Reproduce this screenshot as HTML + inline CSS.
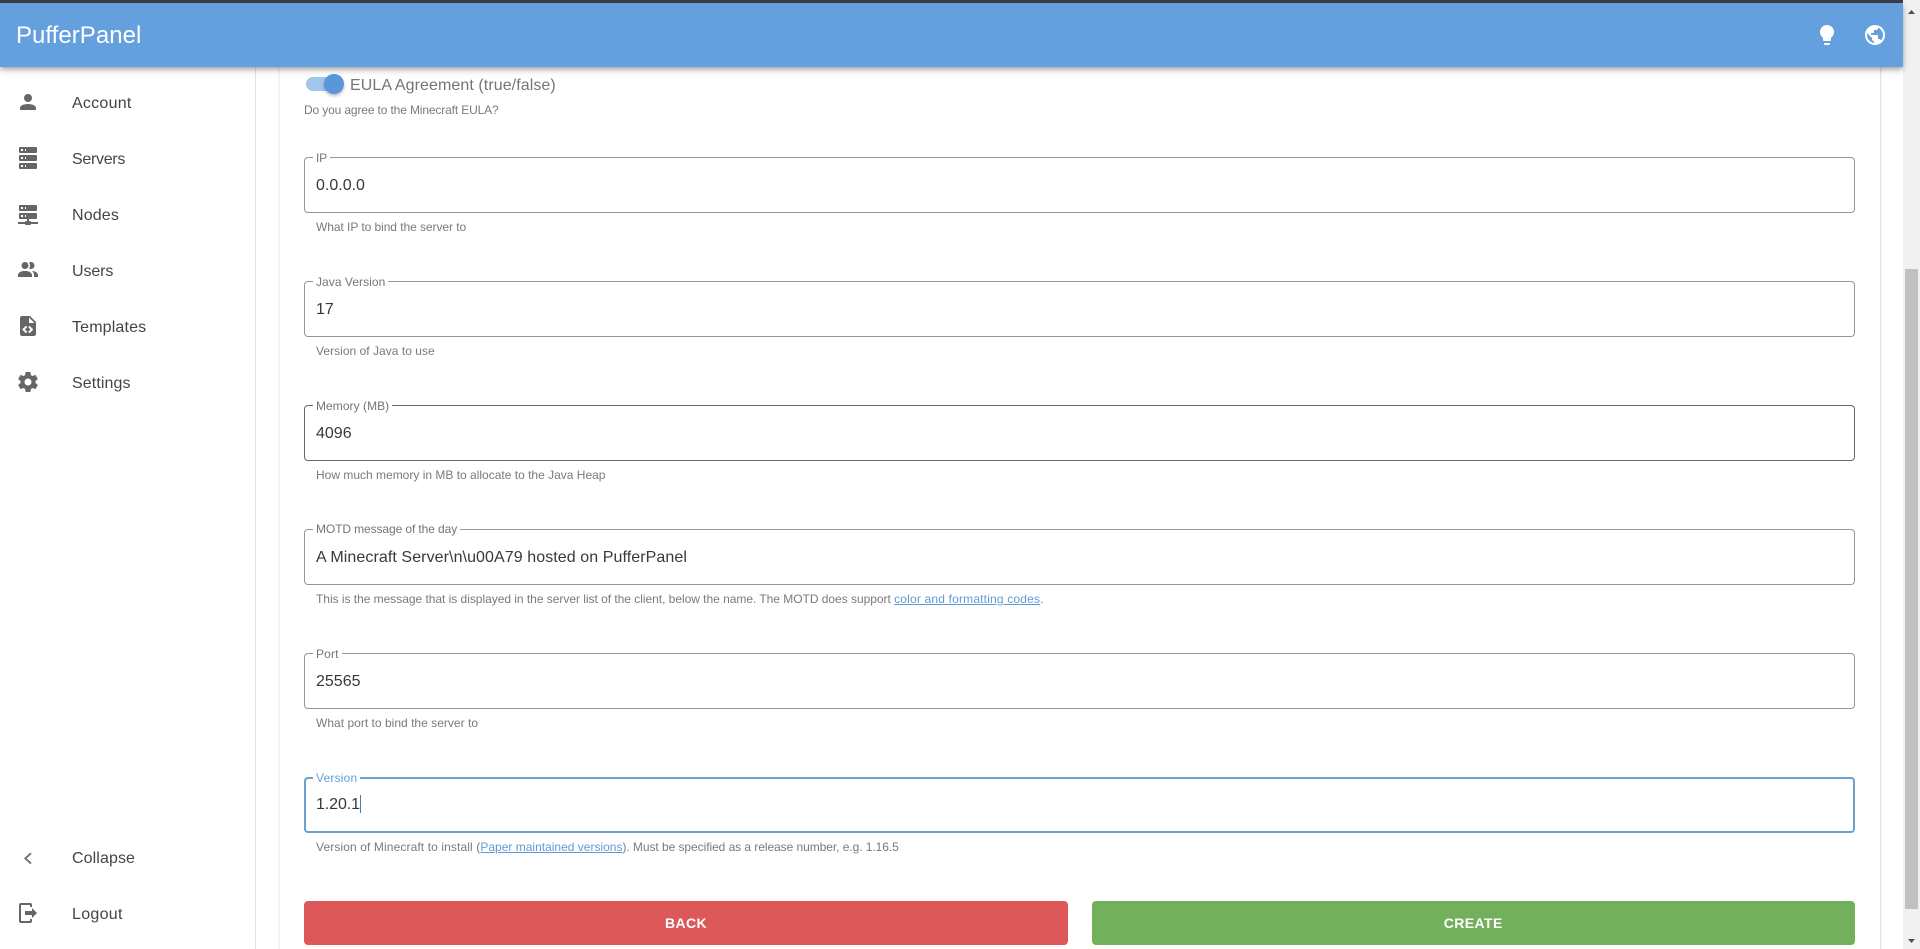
<!DOCTYPE html>
<html lang="en">
<head>
<meta charset="utf-8">
<title>PufferPanel</title>
<style>
html,body{margin:0;padding:0;width:1920px;height:949px;overflow:hidden;background:#fff;font-family:"Liberation Sans",sans-serif;}
.t{position:absolute;white-space:nowrap;line-height:20px;}
#top{position:absolute;left:0;top:0;width:1920px;height:3px;background:#3b3e45;}
#bar{position:absolute;left:0;top:3px;width:1903px;height:64px;background:#649fde;box-shadow:0 2px 4px -1px rgba(0,0,0,.2),0 4px 5px rgba(0,0,0,.14),0 1px 10px rgba(0,0,0,.12);z-index:5;}
#title{left:16px;top:25px;font-size:24px;line-height:22px;color:#fff;z-index:6;letter-spacing:.03px;}
#side{position:absolute;left:0;top:67px;width:255px;height:882px;background:#fff;border-right:1px solid #e0e0e0;}
#card{position:absolute;left:279px;top:0;width:1600px;height:949px;background:#fff;border-left:1px solid #f0f0f0;border-right:1px solid #e4e4e4;box-shadow:0 0 3px rgba(0,0,0,.08);}
.n{font-size:16px;color:#444;left:72px;letter-spacing:.1px;}
svg.i{position:absolute;width:24px;height:24px;left:16px;fill:#666;}
.f{position:absolute;left:304px;width:1549px;height:54px;border:1px solid #959595;border-radius:4px;}
.l{position:absolute;left:312.5px;padding:0 3px;background:#fff;font-size:12px;line-height:12px;color:#757575;white-space:nowrap;letter-spacing:.05px;}
.l b{font-weight:normal;display:inline-block;margin-left:.5px;}
.v{left:316px;font-size:16px;color:#383838;}
.h{left:316px;font-size:12px;color:#7a7a7a;letter-spacing:0;}
.h a{color:#5e9bd6;text-decoration:underline;}
.b{position:absolute;top:901px;height:44px;width:764px;border-radius:4px;color:#fff;font-size:14px;font-weight:bold;letter-spacing:.4px;line-height:44px;text-align:center;}
#sb{position:absolute;left:1903px;top:0;width:17px;height:949px;background:#f1f1f1;}
#sb i{position:absolute;left:2px;width:13px;top:269px;height:640px;background:#c1c1c1;display:block;}
</style>
</head>
<body>
<div id="card"></div>
<div id="side"></div>

<svg class="i" style="top:90px" viewBox="0 0 24 24"><path d="M12,4A4,4 0 0,1 16,8A4,4 0 0,1 12,12A4,4 0 0,1 8,8A4,4 0 0,1 12,4M12,14C16.42,14 20,15.79 20,18V20H4V18C4,15.79 7.58,14 12,14Z"/></svg>
<div class="t n" style="top:93.5px;letter-spacing:.25px">Account</div>
<svg class="i" style="top:146px" viewBox="0 0 24 24"><path d="M4,1H20A1,1 0 0,1 21,2V6A1,1 0 0,1 20,7H4A1,1 0 0,1 3,6V2A1,1 0 0,1 4,1M4,9H20A1,1 0 0,1 21,10V14A1,1 0 0,1 20,15H4A1,1 0 0,1 3,14V10A1,1 0 0,1 4,9M4,17H20A1,1 0 0,1 21,18V22A1,1 0 0,1 20,23H4A1,1 0 0,1 3,22V18A1,1 0 0,1 4,17M9,5H10V3H9V5M9,13H10V11H9V13M9,21H10V19H9V21M5,3V5H7V3H5M5,11V13H7V11H5M5,19V21H7V19H5Z"/></svg>
<div class="t n" style="top:149.5px;letter-spacing:-.3px">Servers</div>
<svg class="i" style="top:202px" viewBox="0 0 24 24"><path d="M13,19H14A1,1 0 0,1 15,20H22V22H15A1,1 0 0,1 14,23H10A1,1 0 0,1 9,22H2V20H9A1,1 0 0,1 10,19H11V17H4A1,1 0 0,1 3,16V12A1,1 0 0,1 4,11H20A1,1 0 0,1 21,12V16A1,1 0 0,1 20,17H13V19M4,3H20A1,1 0 0,1 21,4V8A1,1 0 0,1 20,9H4A1,1 0 0,1 3,8V4A1,1 0 0,1 4,3M9,7H10V5H9V7M9,15H10V13H9V15M5,5V7H7V5H5M5,13V15H7V13H5Z"/></svg>
<div class="t n" style="top:205.5px;letter-spacing:.15px">Nodes</div>
<svg class="i" style="top:258px" viewBox="0 0 24 24"><path d="M16 17V19H2V17S2 13 9 13 16 17 16 17M12.5 7.5A3.5 3.5 0 1 0 9 11A3.5 3.5 0 0 0 12.5 7.5M15.94 13A5.32 5.32 0 0 1 18 17V19H22V17S22 13.37 15.94 13M15 4A3.39 3.39 0 0 0 13.07 4.59A5 5 0 0 1 13.07 10.41A3.39 3.39 0 0 0 15 11A3.5 3.5 0 0 0 15 4Z"/></svg>
<div class="t n" style="top:261.5px;letter-spacing:-.1px">Users</div>
<svg class="i" style="top:314px" viewBox="0 0 24 24"><path d="M13 9H18.5L13 3.5V9M6 2H14L20 8V20C20 21.1 19.1 22 18 22H6C4.89 22 4 21.1 4 20V4C4 2.89 4.89 2 6 2M6.12 15.5L9.86 19.24L11.28 17.83L8.95 15.5L11.28 13.17L9.86 11.76L6.12 15.5M17.28 15.5L13.54 11.76L12.12 13.17L14.45 15.5L12.12 17.83L13.54 19.24L17.28 15.5Z"/></svg>
<div class="t n" style="top:317.5px;letter-spacing:.15px">Templates</div>
<svg class="i" style="top:370px" viewBox="0 0 24 24"><path d="M12,15.5A3.5,3.5 0 0,1 8.5,12A3.5,3.5 0 0,1 12,8.5A3.5,3.5 0 0,1 15.5,12A3.5,3.5 0 0,1 12,15.5M19.43,12.97C19.47,12.65 19.5,12.33 19.5,12C19.5,11.67 19.47,11.34 19.43,11L21.54,9.37C21.73,9.22 21.78,8.95 21.66,8.73L19.66,5.27C19.54,5.05 19.27,4.96 19.05,5.05L16.56,6.05C16.04,5.66 15.5,5.32 14.87,5.07L14.5,2.42C14.46,2.18 14.25,2 14,2H10C9.75,2 9.54,2.18 9.5,2.42L9.13,5.07C8.5,5.32 7.96,5.66 7.44,6.05L4.95,5.05C4.73,4.96 4.46,5.05 4.34,5.27L2.34,8.73C2.21,8.95 2.27,9.22 2.46,9.37L4.57,11C4.53,11.34 4.5,11.67 4.5,12C4.5,12.33 4.53,12.65 4.57,12.97L2.46,14.63C2.27,14.78 2.21,15.05 2.34,15.27L4.34,18.73C4.46,18.95 4.73,19.03 4.95,18.95L7.44,17.94C7.96,18.34 8.5,18.68 9.13,18.93L9.5,21.58C9.54,21.82 9.75,22 10,22H14C14.25,22 14.46,21.82 14.5,21.58L14.87,18.93C15.5,18.67 16.04,18.34 16.56,17.94L19.05,18.95C19.27,19.03 19.54,18.95 19.66,18.73L21.66,15.27C21.78,15.05 21.73,14.78 21.54,14.63L19.43,12.97Z"/></svg>
<div class="t n" style="top:373.5px">Settings</div>
<svg class="i" style="top:845px" viewBox="0 0 24 24"><path d="M15,8.2L9.3,13.4L15,18.6" fill="none" stroke="#707070" stroke-width="1.8"/></svg>
<div class="t n" style="top:848.5px">Collapse</div>
<svg class="i" style="top:901px" viewBox="0 0 24 24"><path d="M16,17V14H9V10H16V7L21,12L16,17M14,2A2,2 0 0,1 16,4V6H14V4H5V20H14V18H16V20A2,2 0 0,1 14,22H5A2,2 0 0,1 3,20V4A2,2 0 0,1 5,2H14Z"/></svg>
<div class="t n" style="top:904.5px;letter-spacing:.3px">Logout</div>

<div style="position:absolute;left:306px;top:77px;width:34px;height:14px;border-radius:7px;background:#a3c5ec"></div>
<div style="position:absolute;left:324px;top:74px;width:20px;height:20px;border-radius:50%;background:#5a96dc;box-shadow:0 2px 3px rgba(0,0,0,.25)"></div>
<div class="t" style="left:350px;top:75.5px;font-size:16px;color:#757575;letter-spacing:.08px">EULA Agreement (true/false)</div>
<div class="t h" style="left:304px;top:100px;letter-spacing:-.14px">Do you agree to the Minecraft EULA?</div>

<div class="f" style="top:157px"></div>
<div class="l" style="top:152px;letter-spacing:-.15px"><b>IP</b></div>
<div class="t v" style="top:175.5px">0.0.0.0</div>
<div class="t h" style="top:217px;letter-spacing:-.06px">What IP to bind the server to</div>

<div class="f" style="top:281px"></div>
<div class="l" style="top:276px"><b>Java Version</b></div>
<div class="t v" style="top:299.5px">17</div>
<div class="t h" style="top:341px;letter-spacing:.03px">Version of Java to use</div>

<div class="f" style="top:405px;border-color:#666"></div>
<div class="l" style="top:400px"><b>Memory (MB)</b></div>
<div class="t v" style="top:423.5px">4096</div>
<div class="t h" style="top:465px">How much memory in MB to allocate to the Java Heap</div>

<div class="f" style="top:529px"></div>
<div class="l" style="top:523px;letter-spacing:-.1px"><b>MOTD message of the day</b></div>
<div class="t v" style="top:547.5px;letter-spacing:.08px">A Minecraft Server\n\u00A79 hosted on PufferPanel</div>
<div class="t h" style="top:589px;letter-spacing:-.03px">This is the message that is displayed in the server list of the client, below the name. The MOTD does support <a href="#" style="letter-spacing:.18px">color and formatting codes</a>.</div>

<div class="f" style="top:653px"></div>
<div class="l" style="top:648px;letter-spacing:.15px"><b>Port</b></div>
<div class="t v" style="top:671.5px">25565</div>
<div class="t h" style="top:713px;letter-spacing:.02px">What port to bind the server to</div>

<div class="f" style="top:777px;width:1547px;height:52px;border:2px solid #6d9fcf"></div>
<div class="l" style="top:772px;color:#649fde;letter-spacing:.2px"><b>Version</b></div>
<div class="t v" style="top:794.5px;letter-spacing:-.1px">1.20.1</div>
<div style="position:absolute;left:360px;top:795px;width:1px;height:18px;background:#4a7fb0"></div>
<div class="t h" style="top:837px"><span style="letter-spacing:.11px">Version of Minecraft to install (</span><a href="#">Paper maintained versions</a><span style="letter-spacing:-.06px">). Must be specified as a release number, e.g. 1.16.5</span></div>

<div class="b" style="left:304px;background:#dd5858">BACK</div>
<div class="b" style="left:1091.5px;width:763.5px;background:#73b05b">CREATE</div>

<div id="top"></div>
<div id="bar"></div>
<div class="t" id="title">PufferPanel</div>
<svg style="position:absolute;left:1815px;top:23px;width:24px;height:24px;fill:#fff;z-index:6" viewBox="0 0 24 24"><path d="M12,2A7,7 0 0,0 5,9C5,11.38 6.19,13.47 8,14.74V17A1,1 0 0,0 9,18H15A1,1 0 0,0 16,17V14.74C17.81,13.47 19,11.38 19,9A7,7 0 0,0 12,2M9,21A1,1 0 0,0 10,22H14A1,1 0 0,0 15,21V20H9V21Z"/></svg>
<svg style="position:absolute;left:1863px;top:23px;width:24px;height:24px;fill:#fff;z-index:6" viewBox="0 0 24 24"><path d="M17.9,17.39C17.64,16.59 16.89,16 16,16H15V13A1,1 0 0,0 14,12H8V10H10A1,1 0 0,0 11,9V7H13A2,2 0 0,0 15,5V4.59C17.93,5.77 20,8.64 20,12C20,14.08 19.2,15.97 17.9,17.39M11,19.93C7.05,19.44 4,16.08 4,12C4,11.38 4.08,10.78 4.21,10.21L9,15V16A2,2 0 0,0 11,18M12,2A10,10 0 0,0 2,12A10,10 0 0,0 12,22A10,10 0 0,0 22,12A10,10 0 0,0 12,2Z"/></svg>

<div id="sb"><i></i>
<svg style="position:absolute;left:4px;top:9px;width:9px;height:6px" viewBox="0 0 9 6"><path d="M4.5 1L8 5H1Z" fill="#505050"/></svg>
<svg style="position:absolute;left:4px;top:938px;width:9px;height:6px" viewBox="0 0 9 6"><path d="M1 1H8L4.5 5Z" fill="#505050"/></svg>
</div>
</body>
</html>
